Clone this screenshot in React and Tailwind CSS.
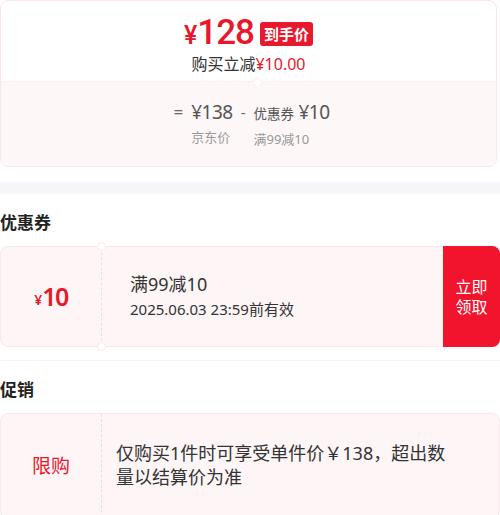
import React from "react";

const red = "text-[#e8182c]";

const App = () => {
  return (
    <div className="w-[500px] h-[515px] overflow-hidden bg-white text-[#333] font-['Noto_Sans','Noto_Sans_CJK_SC',sans-serif]">
      {/* price card */}
      <div className="mr-[3px] border border-[#fbe7ea] rounded-lg overflow-hidden">
        <div className="relative h-[80px] flex flex-col items-center pt-[14px]">
          <div className="flex items-center h-[36px] font-['Roboto',sans-serif]">
            <span className={`${red} text-[25px] font-medium leading-[26px] mt-[5px]`}>¥</span>
            <span className={`${red} text-[35px] font-medium leading-[36px] tracking-[-1px]`}>128</span>
            <span className="ml-[6px] mt-[1px] bg-[#e8192c] text-white text-[15px] font-bold leading-[24px] px-[4px] rounded-[3px] font-['Noto_Sans_CJK_SC',sans-serif]">
              到手价
            </span>
          </div>
          <div className="mt-[3px] text-[16px] leading-[20px] text-[#333]">
            购买立减<span className={red}>¥10.00</span>
          </div>
          <div className="absolute left-[253px] -bottom-[4px] w-[7px] h-[7px] rotate-45 bg-white border-l border-t border-[#fbeef0]" />
        </div>
        <div className="h-[85px] bg-[#fdf7f8] border-t border-[#fbeef0] flex justify-center pt-[18px] text-[#555]">
          <div className="flex items-start gap-[8px] ml-[6px]">
            <span className="text-[17px] leading-[24px] text-[#666]">=</span>
            <div className="flex flex-col">
              <span className="text-[19px] leading-[24px] tracking-[-0.5px]">¥138</span>
              <span className="mt-[4px] text-[13px] leading-[18px] text-[#999]">京东价</span>
            </div>
            <span className="text-[15px] leading-[24px] text-[#666]">-</span>
            <div className="flex flex-col">
              <span className="text-[19px] leading-[24px] tracking-[-0.5px]">
                <span className="text-[13.5px] tracking-normal">优惠券</span> ¥10
              </span>
              <span className="mt-[4px] text-[13px] leading-[18px] text-[#999]">满99减10</span>
            </div>
          </div>
        </div>
      </div>

      <div className="mt-[15px] h-[12px] bg-[#f6f6f9]" />

      {/* coupon */}
      <h2 className="mt-[17px] text-[17px] leading-[24px] font-bold text-[#222]">优惠券</h2>
      <div className="relative mt-[11px] h-[101px] flex bg-[#fdf5f6] border border-[#fbe8eb] rounded-lg">
        <div className="w-[100px] flex items-center justify-center">
          <span className={`${red} text-[14px] font-semibold mt-[5px]`}>¥</span>
          <span className={`${red} text-[25px] font-semibold leading-none tracking-[-1.5px]`}>10</span>
        </div>
        <div className="flex-1 border-l border-dashed border-[#f2dde0] pl-[28px] flex flex-col justify-center pb-[2px]">
          <span className="text-[18px] leading-[25px] text-[#333]">满99减10</span>
          <span className="mt-[1px] text-[15px] leading-[22px] text-[#333]">2025.06.03 23:59前有效</span>
        </div>
        <div className="w-[57px] -my-px -mr-px bg-[#f2132d] rounded-r-lg flex flex-col items-center justify-center text-white text-[16px] leading-[20px]">
          <span>立即</span>
          <span>领取</span>
        </div>
        <div className="absolute left-[96px] -top-[5px] w-[9px] h-[9px] rounded-full bg-white border border-[#fbe8eb]" />
        <div className="absolute left-[96px] -bottom-[5px] w-[9px] h-[9px] rounded-full bg-white border border-[#fbe8eb]" />
      </div>

      <div className="mt-[13px] h-px bg-[#f6f6f7]" />

      {/* promotion */}
      <h2 className="mt-[17px] text-[17px] leading-[24px] font-bold text-[#222]">促销</h2>
      <div className="mt-[11px] h-[106px] flex bg-[#fdf5f6] border border-[#fbe8eb] rounded-lg">
        <div className="w-[100px] flex items-center justify-center">
          <span className={`${red} text-[19px]`}>限购</span>
        </div>
        <div className="flex-1 border-l border-dashed border-[#eedcdf] pl-[14px] flex flex-col justify-center pb-[3px] text-[18px] leading-[24px] text-[#333]">
          <span className="whitespace-nowrap">仅购买1件时可享受单件价￥138，超出数</span>
          <span className="whitespace-nowrap">量以结算价为准</span>
        </div>
      </div>
    </div>
  );
};

export default App;
